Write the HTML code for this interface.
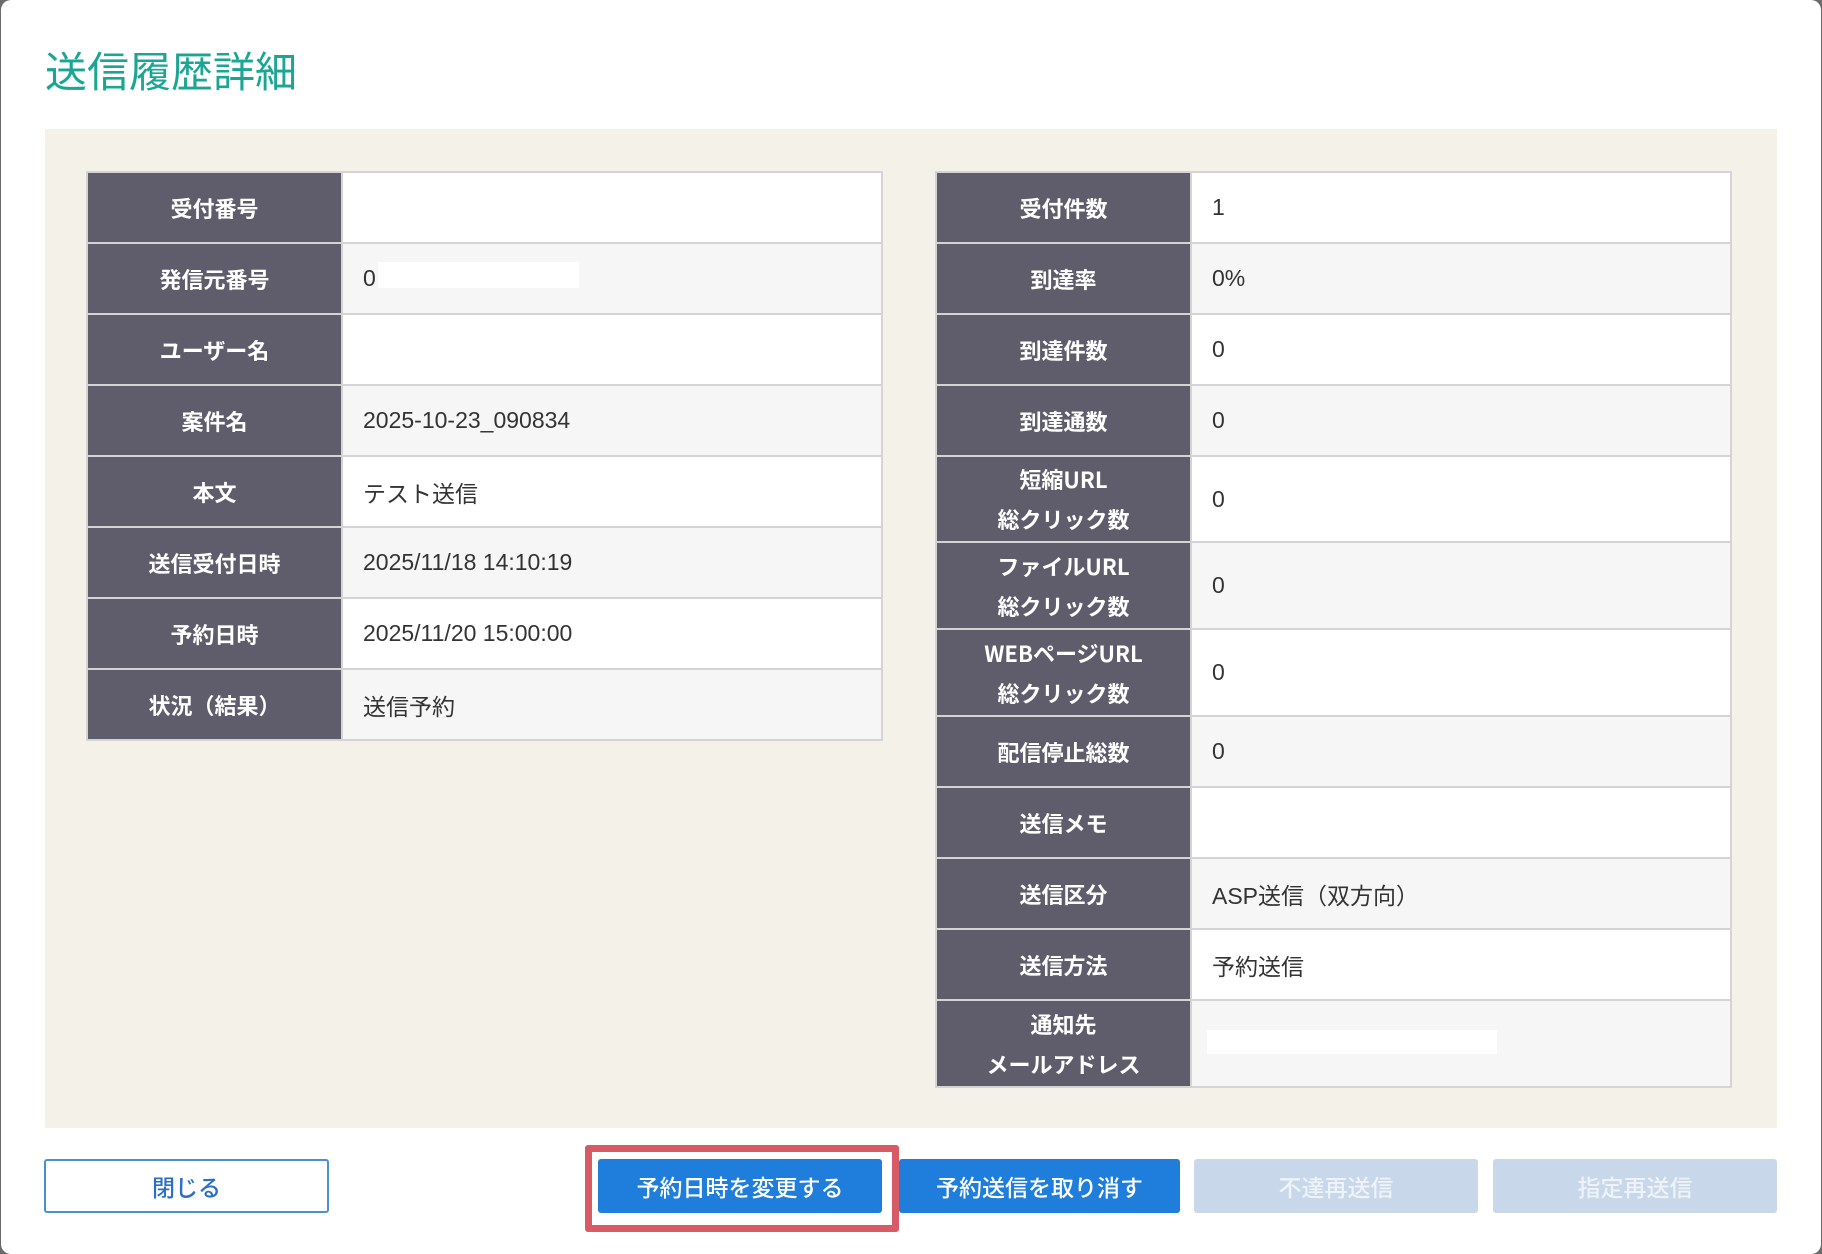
<!DOCTYPE html>
<html><head><meta charset="utf-8"><style>
*{margin:0;padding:0;box-sizing:border-box}
body{width:1822px;height:1254px;background:#6b6b6b;position:relative;overflow:hidden;font-family:"Liberation Sans","Noto Sans CJK JP",sans-serif}
.modal{position:absolute;left:1px;top:0;width:1820px;height:1254px;background:#fff;border-radius:10px}
h1{position:absolute;left:44px;top:39px;font-size:42px;font-weight:400;color:#1ba593;font-family:"Noto Sans CJK JP",sans-serif}
.panel{position:absolute;left:44px;top:129px;width:1732px;height:999px;background:#f4f1e8}
table{position:absolute;border-collapse:collapse;font-family:"Noto Sans CJK JP",sans-serif}
td{border:2px solid #d4d4d4;font-size:23px;color:#333}
th{background:#5f5d6b;color:#fff;font-weight:700;font-size:22px;border:2px solid #d4d4d4;line-height:40px;text-align:center;font-family:"Noto Sans CJK JP",sans-serif}
td{padding-left:20px;font-family:"Liberation Sans","Noto Sans CJK JP",sans-serif}
tr.g td{background:#f6f6f6}
tr.w td{background:#fff}
.btn{position:absolute;top:1159px;height:54px;border-radius:3px;font-size:23px;font-weight:500;display:flex;align-items:center;justify-content:center;font-family:"Noto Sans CJK JP",sans-serif}
.blue{background:#1f7ddb;color:#fff}
.dis{background:#c8d8ea;color:#eef3f8}
.redact{position:absolute;background:#fff}
</style></head><body>
<div class="modal">
<h1>送信履歴詳細</h1>
<div class="panel"></div>
<table style="left:85px;top:171px;width:797px">
<col style="width:255px"><col>
<tr class="w" style="height:71px"><th>受付番号</th><td></td></tr>
<tr class="g" style="height:71px"><th>発信元番号</th><td>0</td></tr>
<tr class="w" style="height:71px"><th>ユーザー名</th><td></td></tr>
<tr class="g" style="height:71px"><th>案件名</th><td>2025-10-23_090834</td></tr>
<tr class="w" style="height:71px"><th>本文</th><td>テスト送信</td></tr>
<tr class="g" style="height:71px"><th>送信受付日時</th><td>2025/11/18 14:10:19</td></tr>
<tr class="w" style="height:71px"><th>予約日時</th><td>2025/11/20 15:00:00</td></tr>
<tr class="g" style="height:71px"><th>状況（結果）</th><td>送信予約</td></tr>
</table>
<div class="redact" style="left:377px;top:262px;width:201px;height:26px"></div>
<table style="left:934px;top:171px;width:797px">
<col style="width:255px"><col>
<tr class="w" style="height:71px"><th>受付件数</th><td>1</td></tr>
<tr class="g" style="height:71px"><th>到達率</th><td>0%</td></tr>
<tr class="w" style="height:71px"><th>到達件数</th><td>0</td></tr>
<tr class="g" style="height:71px"><th>到達通数</th><td>0</td></tr>
<tr class="w" style="height:86px"><th>短縮URL<br>総クリック数</th><td>0</td></tr>
<tr class="g" style="height:87px"><th>ファイルURL<br>総クリック数</th><td>0</td></tr>
<tr class="w" style="height:87px"><th>WEBページURL<br>総クリック数</th><td>0</td></tr>
<tr class="g" style="height:71px"><th>配信停止総数</th><td>0</td></tr>
<tr class="w" style="height:71px"><th>送信メモ</th><td></td></tr>
<tr class="g" style="height:71px"><th>送信区分</th><td>ASP送信（双方向）</td></tr>
<tr class="w" style="height:71px"><th>送信方法</th><td>予約送信</td></tr>
<tr class="g" style="height:87px"><th>通知先<br>メールアドレス</th><td></td></tr>
</table>
<div class="redact" style="left:1206px;top:1030px;width:290px;height:24px"></div>
<div class="btn" style="left:43px;width:285px;border:2px solid #4a90d9;color:#2a6fc4;background:#fff">閉じる</div>
<div style="position:absolute;left:584px;top:1145px;width:314px;height:87px;border:7px solid #d65b66;border-radius:3px"></div>
<div class="btn blue" style="left:597px;width:284px">予約日時を変更する</div>
<div class="btn blue" style="left:898px;width:281px">予約送信を取り消す</div>
<div class="btn dis" style="left:1193px;width:284px">不達再送信</div>
<div class="btn dis" style="left:1492px;width:284px">指定再送信</div>
</div>
</body></html>
